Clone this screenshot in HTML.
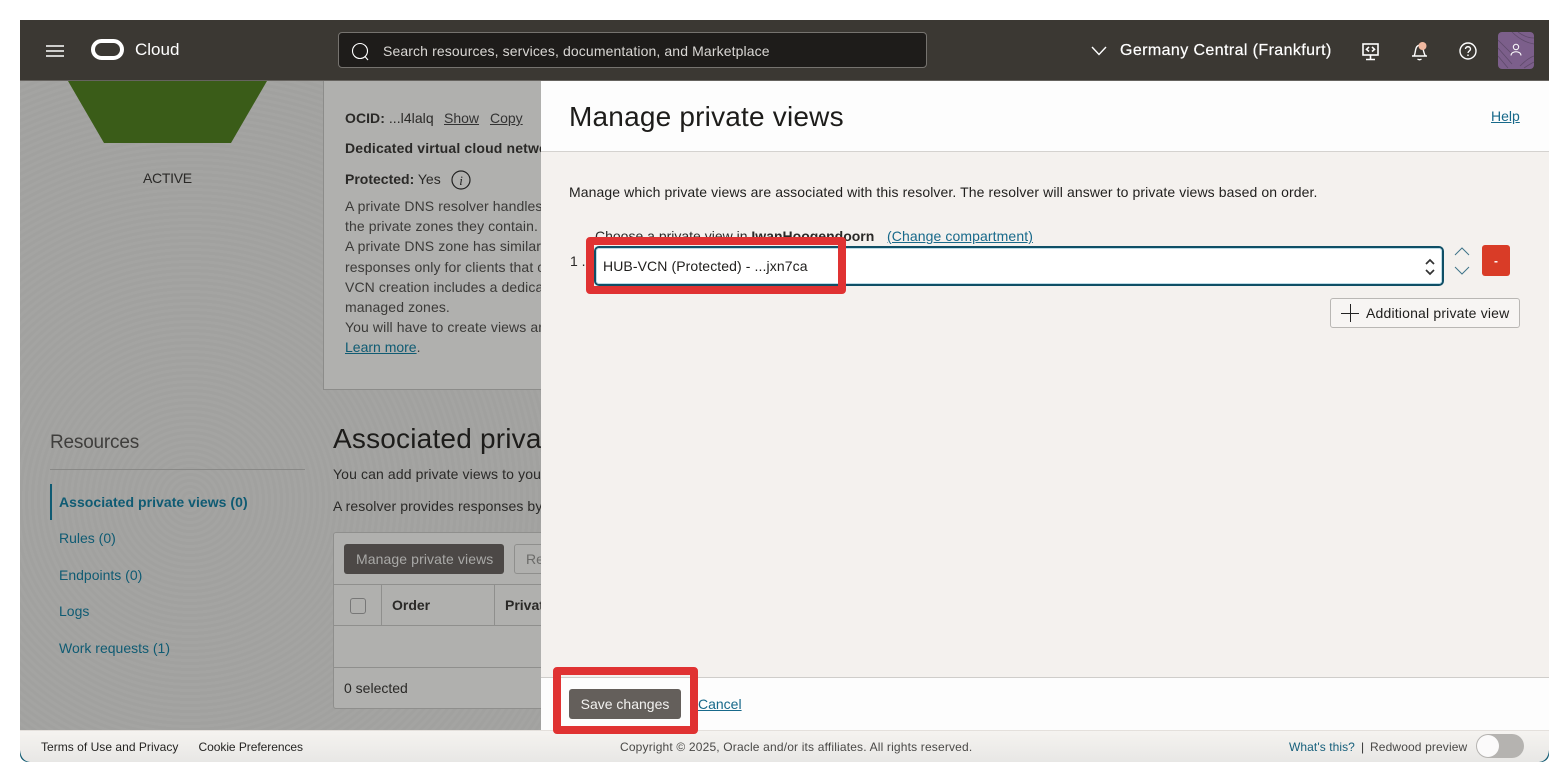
<!DOCTYPE html>
<html><head><meta charset="utf-8"><style>
*{box-sizing:border-box}
html,body{margin:0;padding:0;background:#fff;width:1568px;height:782px;overflow:hidden;font-family:"Liberation Sans",sans-serif}
.t{position:absolute;white-space:nowrap;line-height:20px;height:20px;font-size:14px;color:#1a1816}
.b{font-weight:700}
.u{text-decoration:underline}
.box{position:absolute}
.lk{color:#0f5b73}
.dk{color:#2a2927}
.pt{color:#3b3a38;font-size:14px;letter-spacing:.1px}
</style></head><body>
<div class="box" style="left:20px;top:20px;width:1529px;height:742px;overflow:hidden;border-radius:0 0 8px 8px;background:repeating-radial-gradient(circle at 170px 480px,#a1a19f 0 3px,#a4a4a2 3px 6px)">
<div class="box" style="left:0;top:0;width:1529px;height:742px">

<!-- left shape -->
<svg class="box" style="left:0;top:61px" width="521" height="110"><polygon points="48,0 247,0 211,62 84,62" fill="#3a5c18"/></svg>
<div class="t dk" style="left:123px;top:148px;letter-spacing:-.3px">ACTIVE</div>

<!-- info card -->
<div class="box" style="left:303px;top:61px;width:240px;height:309px;background:#b0b0ae;border-left:1px solid #8c8c8a;border-bottom:1px solid #8c8c8a"></div>
<div class="t dk" style="left:325px;top:88px;letter-spacing:.05px"><span class="b">OCID:</span> ...l4lalq</div>
<div class="t dk u" style="left:424px;top:88px;color:#333">Show</div>
<div class="t dk u" style="left:470px;top:88px;color:#333">Copy</div>
<div class="t dk b" style="left:325px;top:118px;width:196px;overflow:hidden;letter-spacing:.15px">Dedicated virtual cloud network</div>
<div class="t dk" style="left:325px;top:149px"><span class="b">Protected:</span> Yes</div>
<svg class="box" style="left:431px;top:150px" width="20" height="20"><circle cx="10" cy="10" r="9" fill="none" stroke="#222" stroke-width="1.2"/><text x="10" y="15" font-family="Liberation Serif" font-style="italic" font-size="13" text-anchor="middle" fill="#222">i</text></svg>
<div class="t pt" style="left:325px;top:176px;width:196px;overflow:hidden">A private DNS resolver handles</div>
<div class="t pt" style="left:325px;top:196px;width:196px;overflow:hidden">the private zones they contain.</div>
<div class="t pt" style="left:325px;top:216px;width:196px;overflow:hidden">A private DNS zone has similar</div>
<div class="t pt" style="left:325px;top:237px;width:196px;overflow:hidden">responses only for clients that can</div>
<div class="t pt" style="left:325px;top:257px;width:196px;overflow:hidden">VCN creation includes a dedicated</div>
<div class="t pt" style="left:325px;top:277px;width:196px;overflow:hidden">managed zones.</div>
<div class="t pt" style="left:325px;top:297px;width:196px;overflow:hidden">You will have to create views and</div>
<div class="t pt" style="left:325px;top:317px;letter-spacing:0"><span class="u lk">Learn more</span>.</div>

<!-- resources -->
<div class="t" style="left:30px;top:411px;height:24px;line-height:24px;font-size:19px;color:#3f3e3c;letter-spacing:-.2px">Resources</div>
<div class="box" style="left:30px;top:449px;width:255px;height:1px;background:#888886"></div>
<div class="box" style="left:30px;top:464px;width:2px;height:36px;background:#0f5b73"></div>
<div class="t b lk" style="left:39px;top:472px;letter-spacing:.04px">Associated private views (0)</div>
<div class="t lk" style="left:39px;top:508px">Rules (0)</div>
<div class="t lk" style="left:39px;top:545px">Endpoints (0)</div>
<div class="t lk" style="left:39px;top:581px">Logs</div>
<div class="t lk" style="left:39px;top:618px">Work requests (1)</div>

<!-- associated -->
<div class="t" style="left:313px;top:401px;width:208px;overflow:hidden;height:36px;line-height:36px;font-size:28px;color:#1d1c1a;letter-spacing:.2px">Associated private views</div>
<div class="t dk" style="left:313px;top:444px;width:208px;overflow:hidden;letter-spacing:.12px">You can add private views to your</div>
<div class="t dk" style="left:313px;top:476px;width:208px;overflow:hidden;letter-spacing:.1px">A resolver provides responses by</div>

<!-- table -->
<div class="box" style="left:313px;top:512px;width:230px;height:177px;background:#b0b0ae;border:1px solid #8f8f8d;border-radius:3px"></div>
<div class="box" style="left:324px;top:524px;width:160px;height:30px;background:#4c4846;border-radius:3px"></div>
<div class="t" style="left:336px;top:529px;color:#a9a9a7;letter-spacing:.1px">Manage private views</div>
<div class="box" style="left:494px;top:524px;width:40px;height:30px;border:1px solid #8f8f8d;border-radius:3px"></div>
<div class="t" style="left:506px;top:529px;color:#6b6b69;width:15px;overflow:hidden">Remove</div>
<div class="box" style="left:314px;top:564px;width:207px;height:1px;background:#8f8f8d"></div>
<div class="box" style="left:314px;top:605px;width:207px;height:1px;background:#8f8f8d"></div>
<div class="box" style="left:314px;top:647px;width:207px;height:1px;background:#8f8f8d"></div>
<div class="box" style="left:361px;top:565px;width:1px;height:40px;background:#8f8f8d"></div>
<div class="box" style="left:474px;top:565px;width:1px;height:40px;background:#8f8f8d"></div>
<div class="box" style="left:330px;top:578px;width:16px;height:16px;border:1px solid #777;border-radius:3px"></div>
<div class="t dk b" style="left:372px;top:575px">Order</div>
<div class="t dk b" style="left:485px;top:575px;width:36px;overflow:hidden">Private</div>
<div class="t dk" style="left:324px;top:658px">0 selected</div>

<!-- drawer -->
<div class="box" style="left:521px;top:61px;width:1008px;height:649px;background:#f4f1ee"></div>
<div class="box" style="left:521px;top:61px;width:1008px;height:71px;background:#fdfdfd;border-bottom:1px solid #d4d2cf"></div>
<div class="t" style="left:549px;top:80px;height:34px;line-height:34px;font-size:28px;color:#1d1c1a;letter-spacing:.2px">Manage private views</div>
<div class="t u lk" style="left:1471px;top:86px;color:#17698a">Help</div>
<div class="t" style="left:549px;top:162px;font-size:14px;color:#201f1d;letter-spacing:.1px">Manage which private views are associated with this resolver. The resolver will answer to private views based on order.</div>
<div class="t dk" style="left:575px;top:206px">Choose a private view in <span class="b">IwanHoogendoorn</span></div>
<div class="t u" style="left:867px;top:206px;color:#17698a;letter-spacing:.1px">(Change compartment)</div>
<div class="t dk" style="left:550px;top:231px">1 .</div>

<div class="box" style="left:574px;top:226px;width:850px;height:40px;background:#fff;border:2px solid #0f4f66;border-radius:5px;outline:1px solid #bcdbe6;outline-offset:-3px"></div>
<div class="t" style="left:583px;top:236px;color:#1f1e1c;letter-spacing:.1px">HUB-VCN (Protected) - ...jxn7ca</div>
<svg class="box" style="left:1403px;top:236px" width="14" height="22" fill="none" stroke="#333" stroke-width="1.7"><path d="M3 8 7 4 11 8M3 14 7 18 11 14"/></svg>
<svg class="box" style="left:1434px;top:224px" width="16" height="34" fill="none" stroke="#3f7489" stroke-width="1"><path d="M1 11 8 4 15 11M1 23 8 30 15 23"/></svg>
<div class="box" style="left:1462px;top:225px;width:28px;height:31px;background:#d93c27;border-radius:3px"></div>
<div class="t b" style="left:1462px;top:231px;width:28px;text-align:center;color:#fff;font-size:12px">-</div>

<div class="box" style="left:1310px;top:278px;width:190px;height:30px;background:#f7f5f3;border:1px solid #b9b7b4;border-radius:3px"></div>
<svg class="box" style="left:1321px;top:284px" width="18" height="18" stroke="#222" stroke-width="1"><path d="M0 9.5H18M9.5 0V18"/></svg>
<div class="t" style="left:1346px;top:283px;color:#1f1e1c;letter-spacing:.18px">Additional private view</div>

<!-- drawer footer -->
<div class="box" style="left:521px;top:657px;width:1008px;height:53px;background:#fdfdfd;border-top:1px solid #cfcdca"></div>
<div class="box" style="left:549px;top:669px;width:112px;height:30px;background:#645f5b;border-radius:3px"></div>
<div class="t" style="left:549px;top:674px;width:112px;text-align:center;color:#f3f2f0">Save changes</div>
<div class="t u" style="left:678px;top:674px;color:#17698a">Cancel</div>

<!-- footer -->
<div class="box" style="left:0;top:710px;width:1529px;height:32px;background:linear-gradient(#f5f3f0,#e8e7e5);border-top:1px solid #e4e0dc"></div>
<svg class="box" style="left:0;top:730px" width="14" height="12"><path d="M0 0V12H10Q1 11 0 0Z" fill="#0f5b73"/></svg>
<svg class="box" style="left:1515px;top:730px" width="14" height="12"><path d="M14 0V12H4Q13 11 14 0Z" fill="#0f5b73"/></svg>
<div class="t" style="left:21px;top:717px;font-size:12px;color:#252422;letter-spacing:.03px">Terms of Use and Privacy</div>
<div class="t" style="left:178.5px;top:717px;font-size:12px;color:#252422;letter-spacing:-.05px">Cookie Preferences</div>
<div class="t" style="left:600px;top:717px;font-size:12px;color:#4a4947;letter-spacing:.17px">Copyright © 2025, Oracle and/or its affiliates. All rights reserved.</div>
<div class="t" style="left:1269px;top:717px;font-size:12px;color:#17607c;letter-spacing:.08px">What's this?</div>
<div class="t" style="left:1341px;top:717px;font-size:12px;color:#333">|</div>
<div class="t" style="left:1350px;top:717px;font-size:12px;color:#4a4947;letter-spacing:.13px">Redwood preview</div>
<div class="box" style="left:1456px;top:714px;width:48px;height:24px;background:#b5b3b0;border-radius:12px"></div>
<div class="box" style="left:1457px;top:715px;width:22px;height:22px;background:#fbfafa;border-radius:50%"></div>

<!-- header -->
<div class="box" style="left:0;top:0;width:1529px;height:61px;background:#3b3833;border-bottom:1px solid #66635f"></div>
<svg class="box" style="left:26px;top:24px" width="18" height="14" stroke="#fff" stroke-width="1.5"><path d="M0 2H18M0 7H18M0 12H18"/></svg>
<div class="box" style="left:71px;top:19px;width:33px;height:21px;border:4px solid #fff;border-radius:10.5px"></div>
<div class="t" style="left:115px;top:20px;font-size:17px;color:#fff;line-height:20px;margin-top:0">Cloud</div>
<div class="box" style="left:318px;top:12px;width:589px;height:36px;background:#1e1c1a;border:1px solid #76736f;border-radius:4px"></div>
<svg class="box" style="left:331px;top:22px" width="20" height="20" fill="none" stroke="#fff" stroke-width="1.1"><circle cx="9" cy="9" r="7.5"/><path d="M14 14.5 17 18"/></svg>
<div class="t" style="left:363px;top:21px;color:#d9d7d4;letter-spacing:.12px">Search resources, services, documentation, and Marketplace</div>
<svg class="box" style="left:1071px;top:25px" width="16" height="12" fill="none" stroke="#fff" stroke-width="1.4"><path d="M1 2 8 9.5 15 2"/></svg>
<div class="t" style="left:1100px;top:21px;font-size:16px;color:#fff;letter-spacing:.4px;-webkit-text-stroke:.2px #fff">Germany Central (Frankfurt)</div>
<svg class="box" style="left:1341px;top:21px" width="20" height="20" fill="none" stroke="#fff" stroke-width="1.6"><rect x="2" y="3" width="15" height="11"/><path d="M9.500 14V18M5 18.500H14M8 6 5.500 8.300 8 10.500M11 6 13.500 8.300 11 10.500"/></svg>
<svg class="box" style="left:1390px;top:20px" width="20" height="22" fill="none" stroke="#fff" stroke-width="1.4"><path d="M2 16H17M4 16C6 13 4.500 6 9.500 5C14 6 13 13 15.500 16M7.500 19Q9.500 20.500 11.500 19"/><circle cx="12.500" cy="6" r="4" fill="#f0b8a0" stroke="none"/></svg>
<svg class="box" style="left:1438px;top:21px" width="20" height="20" fill="none" stroke="#fff" stroke-width="1.4"><circle cx="10" cy="10" r="8"/><path d="M7.500 8C7.500 5 12.500 5 12.500 8C12.500 10 10 10 10 12"/><path d="M10 13.500V15"/></svg>
<div class="box" style="left:1478px;top:12px;width:36px;height:37px;background:#7c5f8b;border-radius:4px;overflow:hidden"></div>
<svg class="box" style="left:1478px;top:12px" width="36" height="37" fill="none" stroke="#5f4a6b" stroke-width=".8"><path d="M0 8 14 22M0 16 14 32M0 24 10 36M14 0Q24 10 36 12M20 0Q28 6 36 6M22 34Q30 26 36 24M26 36Q32 32 36 30"/></svg>
<svg class="box" style="left:1488px;top:22px" width="16" height="16" fill="none" stroke="#fff" stroke-width="1"><circle cx="8" cy="5" r="2.700"/><path d="M3 13.500C3 8.500 13 8.500 13 13.500"/></svg>

<!-- red highlights -->
<div class="box" style="left:566px;top:217px;width:260px;height:57px;border:8px solid #e03232;border-radius:4px"></div>
<div class="box" style="left:533px;top:647px;width:145px;height:67px;border:8px solid #e03232;border-radius:4px"></div>
</div>
</div>
</body></html>
